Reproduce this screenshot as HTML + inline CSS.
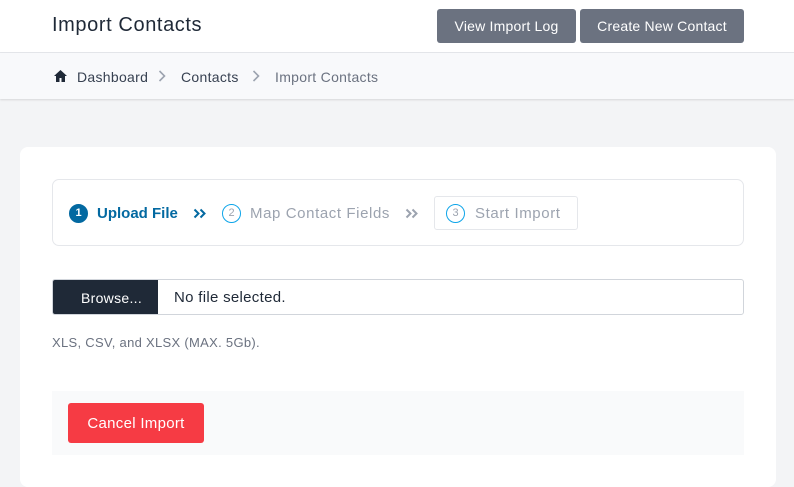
<!DOCTYPE html>
<html><head><style>
*{box-sizing:border-box;margin:0;padding:0}
body{width:794px;height:470px;overflow:hidden;background:#f3f4f6;font-family:"Liberation Sans",sans-serif;position:relative;letter-spacing:0.3px}
.hdr{position:absolute;left:0;top:0;width:794px;height:53px;background:#fff;border-bottom:1px solid #e5e7eb}
.hdr h1{position:absolute;left:52px;top:14px;font-size:20px;font-weight:normal;color:#1f2937;letter-spacing:0.6px}
.btn{position:absolute;top:9px;height:34px;background:#6b7280;color:#fff;font-size:14px;border-radius:3px;line-height:35px;text-align:center;letter-spacing:0.2px}
.bc{position:absolute;left:0;top:53px;width:794px;height:46px;background:#f8f9fb;box-shadow:0 1px 2px rgba(0,0,0,.12);font-size:14px;color:#374151}
.bc span{position:absolute;top:15px}
.card{position:absolute;left:20px;top:147px;width:756px;height:340px;background:#fff;border-radius:8px}
.steps{position:absolute;left:52px;top:179px;width:692px;height:67px;border:1px solid #e5e7eb;border-radius:7px;background:#fff}
.circ{position:absolute;top:24px;width:19px;height:19px;border-radius:50%;border:1.5px solid #0ea5e9;color:#9ca3af;font-size:11px;text-align:center;line-height:16px;letter-spacing:0}
.st{position:absolute;top:25px;font-size:15px;color:#9ca3af}
.file{position:absolute;left:52px;top:279px;width:692px;height:36px;border:1px solid #d1d5db;border-radius:3px;overflow:hidden;background:#fff}
</style></head><body>
<div class="hdr"><h1>Import Contacts</h1>
<div class="btn" style="left:437px;width:139px">View Import Log</div>
<div class="btn" style="left:580px;width:164px">Create New Contact</div></div>
<div class="bc">
<svg style="position:absolute;left:54px;top:17px" width="13" height="12" viewBox="0 0 13 12"><path d="M6.5 0L0 6h2v6h3.5V8h2v4H11V6h2z" fill="#1f2937"/></svg>
<span style="left:77px;top:16px">Dashboard</span>
<svg style="position:absolute;left:158px;top:17px" width="8" height="12"><path d="M1.5 1l5 5-5 5" stroke="#9ca3af" stroke-width="1.6" fill="none"/></svg>
<span style="left:181px;top:16px">Contacts</span>
<svg style="position:absolute;left:252px;top:17px" width="8" height="12"><path d="M1.5 1l5 5-5 5" stroke="#9ca3af" stroke-width="1.6" fill="none"/></svg>
<span style="left:275px;top:16px;color:#6b7280">Import Contacts</span>
</div>
<div class="card"></div>
<div class="steps">
<div class="circ" style="left:16px;background:#0369a1;border-color:#0369a1;color:#fff;font-weight:bold">1</div>
<span class="st" style="left:44px;color:#0369a1;font-weight:bold;letter-spacing:0">Upload File</span>
<svg style="position:absolute;left:140px;top:28px" width="14" height="11"><path d="M1.5 1.5l4 4-4 4M7.5 1.5l4 4-4 4" stroke="#0369a1" stroke-width="2" fill="none"/></svg>
<div class="circ" style="left:169px">2</div>
<span class="st" style="left:197px;letter-spacing:0.6px">Map Contact Fields</span>
<svg style="position:absolute;left:352px;top:28px" width="14" height="11"><path d="M1.5 1.5l4 4-4 4M7.5 1.5l4 4-4 4" stroke="#9ca3af" stroke-width="2" fill="none"/></svg>
<div style="position:absolute;left:381px;top:16px;width:144px;height:34px;border:1px solid #e5e7eb;border-radius:3px"></div>
<div class="circ" style="left:393px">3</div>
<span class="st" style="left:422px;letter-spacing:0.6px">Start Import</span>
</div>
<div class="file"><div style="position:absolute;left:0;top:0;width:105px;height:36px;background:#1f2937;color:#fff;font-size:14px;line-height:36px;padding-left:28px">Browse...</div>
<span style="position:absolute;left:121px;top:9px;font-size:15px;color:#1f2937">No file selected.</span></div>
<div style="position:absolute;left:52px;top:335px;font-size:13px;color:#6b7280">XLS, CSV, and XLSX (MAX. 5Gb).</div>
<div style="position:absolute;left:52px;top:391px;width:692px;height:64px;background:#f9fafb"></div>
<div style="position:absolute;left:68px;top:403px;width:136px;height:40px;background:#f63b44;border-radius:3px;color:#fff;font-size:15px;line-height:41px;text-align:center">Cancel Import</div>
</body></html>
